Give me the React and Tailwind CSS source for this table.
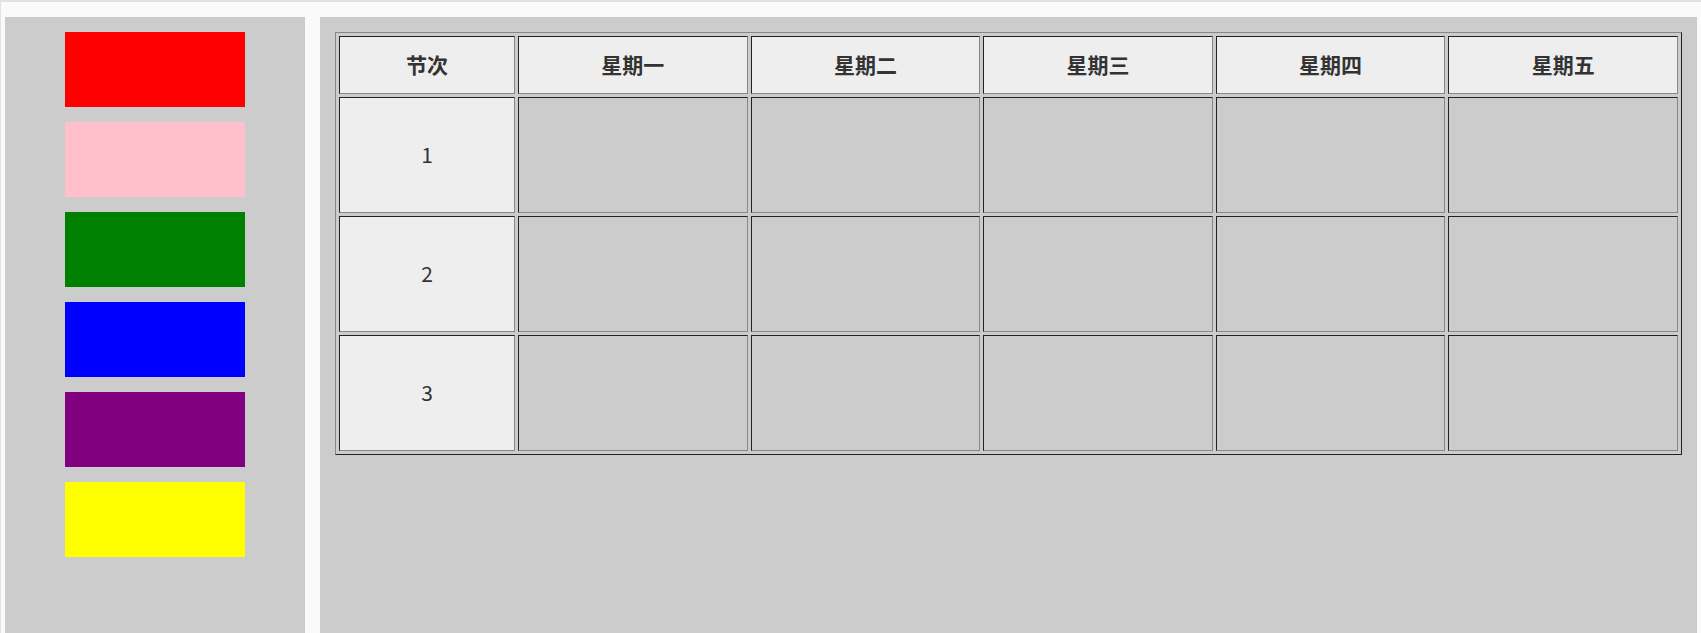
export default function App() {
  const colors = ["bg-[#ff0000]", "bg-[#ffc0cb]", "bg-[#008000]", "bg-[#0000ff]", "bg-[#800080]", "bg-[#ffff00]"];
  const days = ["星期一", "星期二", "星期三", "星期四", "星期五"];
  const cellBorder = "border border-t-[#222] border-l-[#222] border-r-[#888] border-b-[#888]";
  return (
    <div
      className="w-[1701px] h-[633px] overflow-hidden bg-[#fafafa] border-t-2 border-l border-[#dee2e6] pl-[4px] pr-[4px] pt-[15px] flex gap-[15px] text-[#333]"
      style={{ fontFamily: '"Noto Sans CJK SC", "Noto Sans", sans-serif' }}
    >
      <div className="w-[300px] h-[640px] shrink-0 bg-[#cccccc] pt-[15px] flex flex-col items-center gap-[15px]">
        {colors.map((c) => (
          <div key={c} className={`w-[180px] h-[75px] ${c}`} />
        ))}
      </div>
      <div className="flex-1 h-[640px] bg-[#cccccc] p-[15px]">
        <table className="w-full table-fixed border-separate border-spacing-[3px] border border-t-[#888] border-l-[#888] border-r-[#222] border-b-[#222] text-[21px]">
          <thead>
            <tr>
              <th className={`w-[176px] h-[58px] bg-[#eeeeee] font-bold text-center align-middle p-0 ${cellBorder}`}>节次</th>
              {days.map((d) => (
                <th key={d} className={`h-[58px] bg-[#eeeeee] font-bold text-center align-middle p-0 ${cellBorder}`}>{d}</th>
              ))}
            </tr>
          </thead>
          <tbody>
            {[1, 2, 3].map((n) => (
              <tr key={n}>
                <td className={`h-[116px] bg-[#eeeeee] text-center align-middle p-0 ${cellBorder}`}>{n}</td>
                {days.map((d) => (
                  <td key={d} className={`h-[116px] p-0 ${cellBorder}`} />
                ))}
              </tr>
            ))}
          </tbody>
        </table>
      </div>
    </div>
  );
}
